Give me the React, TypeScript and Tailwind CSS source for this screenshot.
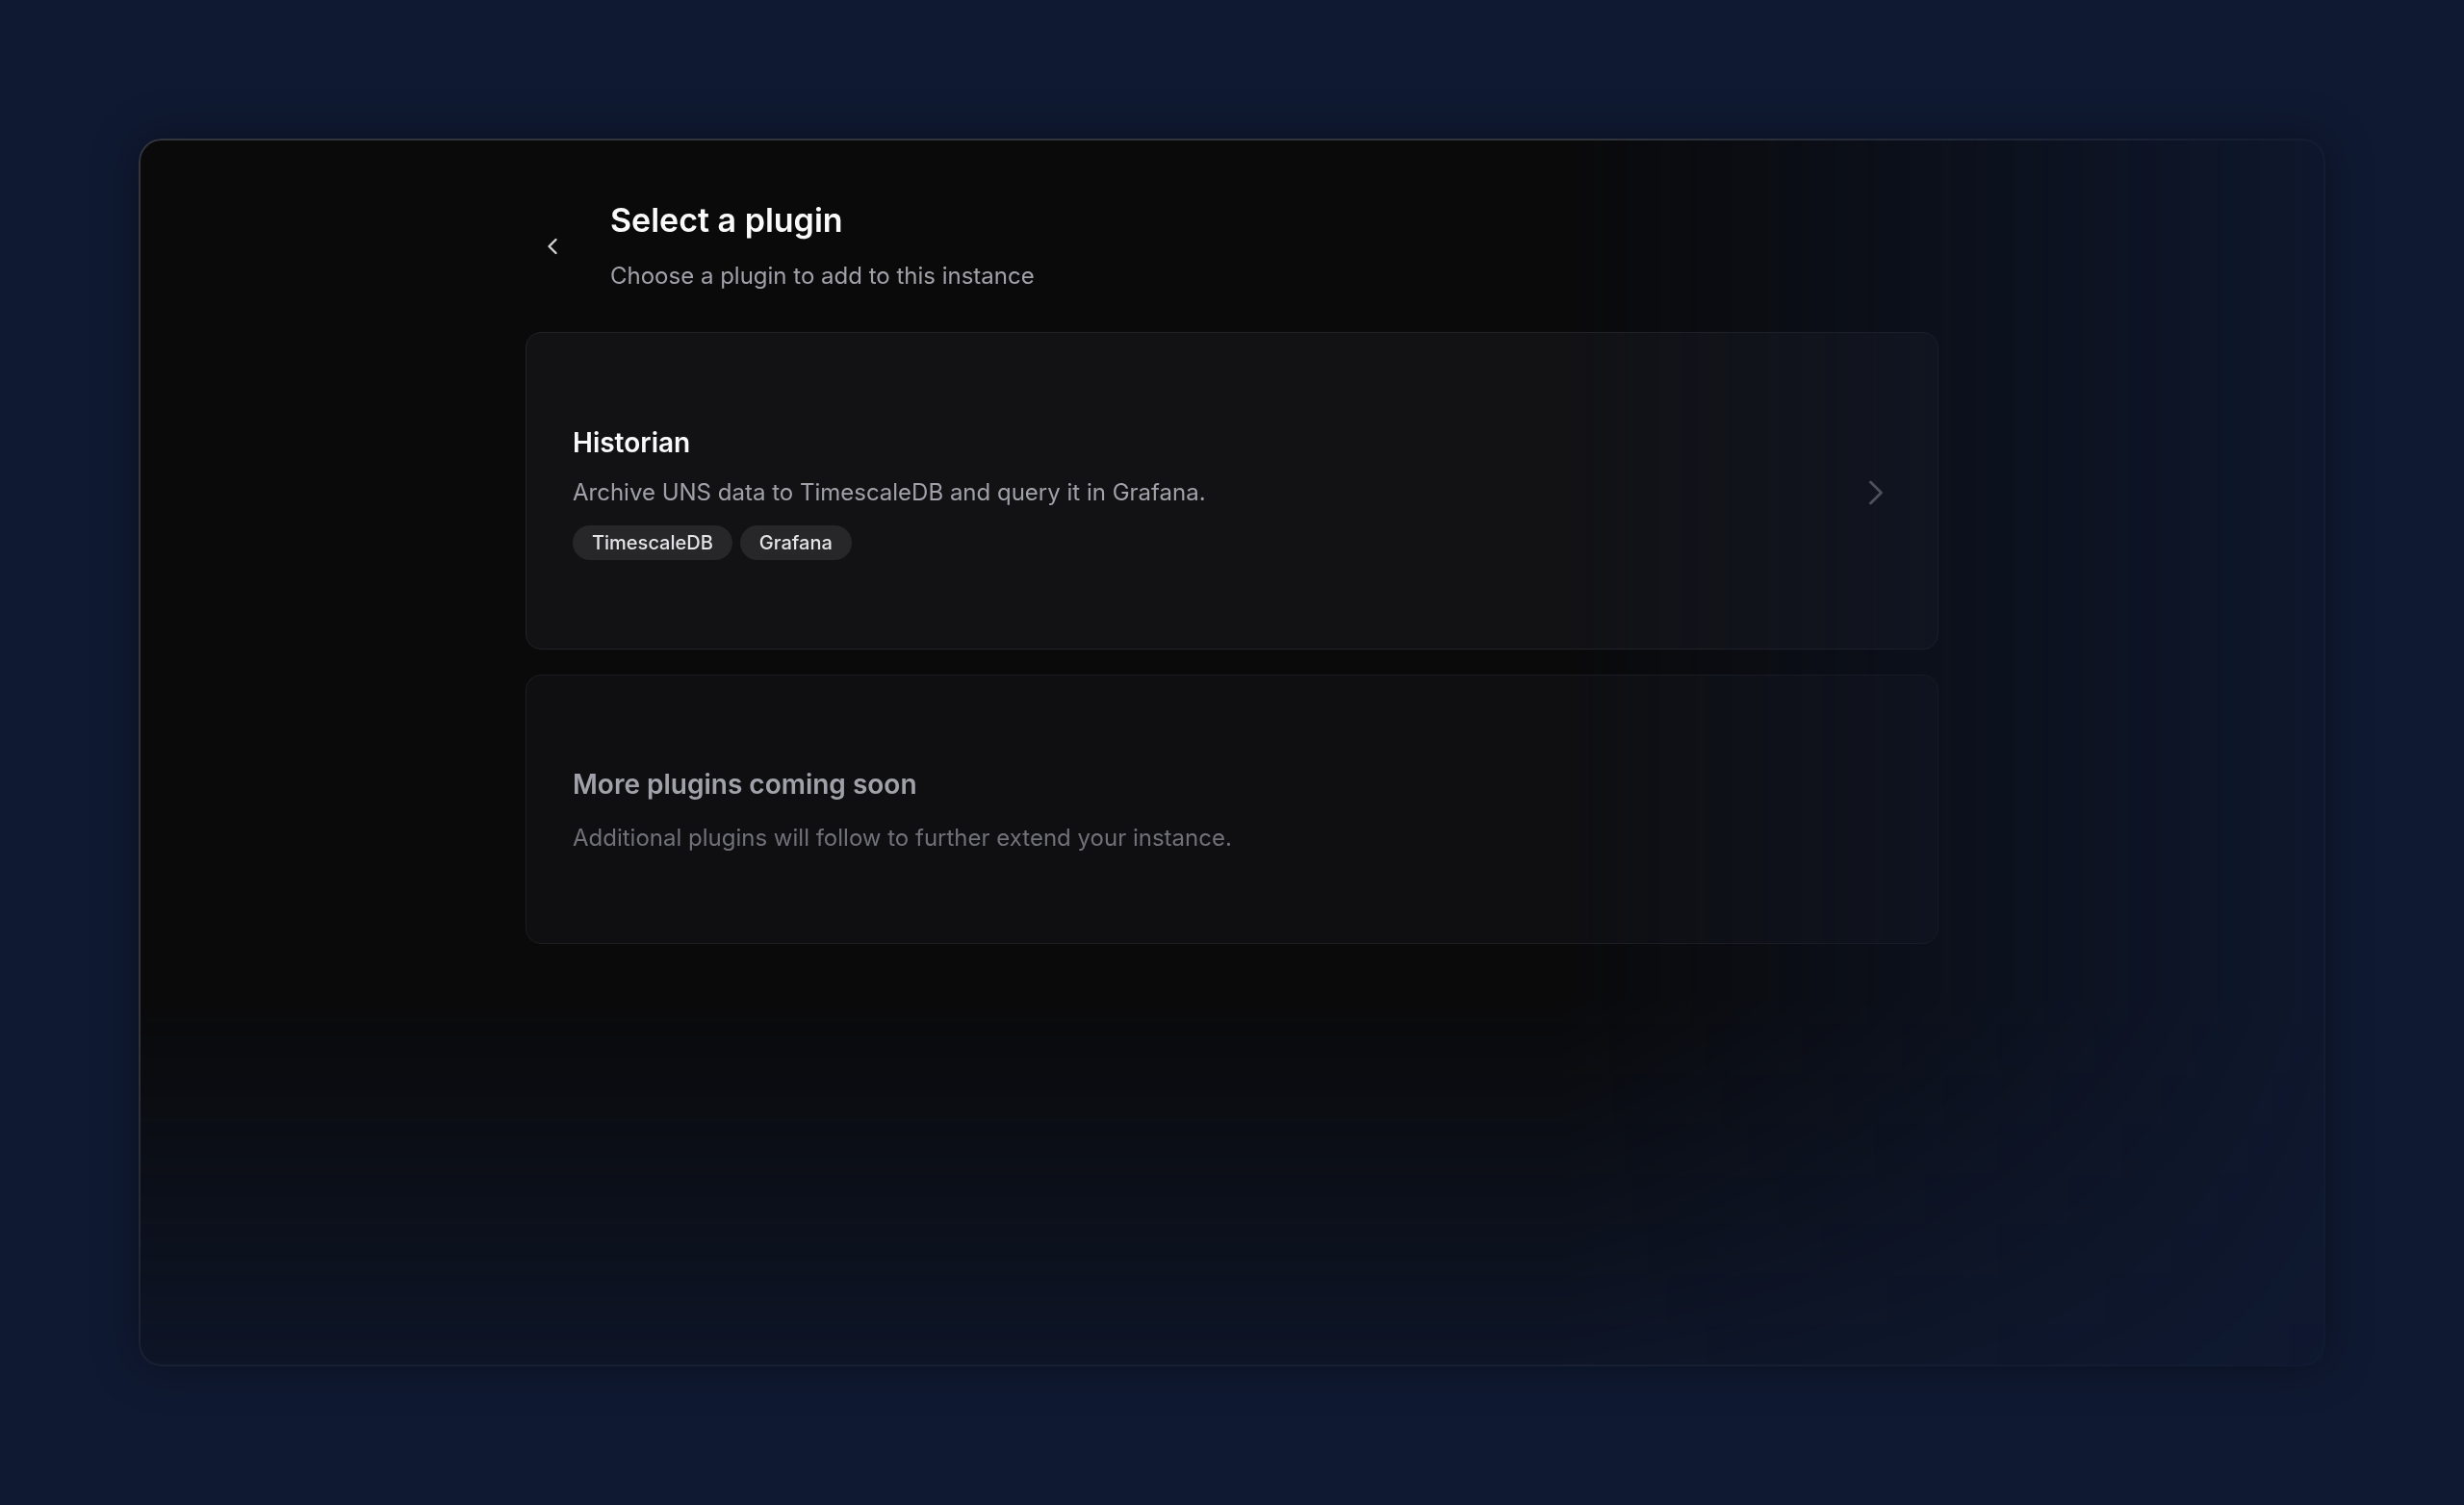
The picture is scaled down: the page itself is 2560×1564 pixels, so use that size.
import { ChevronLeft, ChevronRight } from 'lucide-react'

// Tags shown on the plugin card
const historianTags = ['TimescaleDB', 'Grafana']

function PluginCard() {
  return (
    <div className="flex cursor-pointer items-center rounded-2xl border border-[#232327] bg-[#121215] pt-[96px] pb-[92px] pl-12 pr-[42px]">
      <div className="flex-1">
        <h2 className="text-[28px] leading-9 font-semibold text-[#fafafa]">Historian</h2>
        <p className="mt-[18px] text-2xl leading-8 text-[#a1a1aa]">
          Archive UNS data to TimescaleDB and query it in Grafana.
        </p>
        <div className="mt-[18px] flex gap-2">
          {historianTags.map(tag => (
            <span
              key={tag}
              className="h-9 rounded-full bg-[#27272a] px-5 text-[20px] leading-9 font-medium text-[#e4e4e7]"
            >
              {tag}
            </span>
          ))}
        </div>
      </div>
      <ChevronRight size={44} strokeWidth={1.5} className="shrink-0 text-[#71717a]" />
    </div>
  )
}

function ComingSoonCard() {
  return (
    <div className="rounded-2xl border border-[#1d1d21] bg-[#0f0f12] px-12 pt-[95px] pb-[93px]">
      <h2 className="text-[28px] leading-9 font-semibold text-[#a1a1aa]">More plugins coming soon</h2>
      <p className="mt-[22px] text-2xl leading-8 text-[#71717a]">
        Additional plugins will follow to further extend your instance.
      </p>
    </div>
  )
}

export default function App() {
  return (
    <div className="flex h-screen w-full bg-[#0f1931] p-[144px] font-['Inter','Liberation_Sans',sans-serif]">
      <div className="flex-1 rounded-3xl shadow-[0_0_48px_rgba(0,0,0,0.35)]">
        {/* fade toward the right */}
        <div className="h-full [-webkit-mask-image:linear-gradient(to_right,#000_65%,transparent_105%)] [mask-image:linear-gradient(to_right,#000_65%,transparent_105%)]">
          {/* fade toward the bottom */}
          <div className="h-full rounded-3xl border-2 border-[#33363c] bg-[#0a0a0b] [-webkit-mask-image:linear-gradient(to_bottom,#000_70%,transparent_111%)] [mask-image:linear-gradient(to_bottom,#000_70%,transparent_111%)]">
            <div className="mx-auto flex w-full max-w-[1468px] flex-col pt-[63px]">
              {/* Header */}
              <div className="flex items-center gap-8">
                <button className="flex h-14 w-14 items-center justify-center text-[#d4d4d8]">
                  <ChevronLeft size={28} strokeWidth={2} />
                </button>
                <div>
                  <h1 className="text-[34px] leading-10 font-semibold text-[#fafafa]">Select a plugin</h1>
                  <p className="mt-[22px] text-2xl leading-8 text-[#a1a1aa]">Choose a plugin to add to this instance</p>
                </div>
              </div>

              {/* Plugin list */}
              <div className="mt-[42px] flex flex-col gap-[26px]">
                <PluginCard />
                <ComingSoonCard />
              </div>
            </div>
          </div>
        </div>
      </div>
    </div>
  )
}
